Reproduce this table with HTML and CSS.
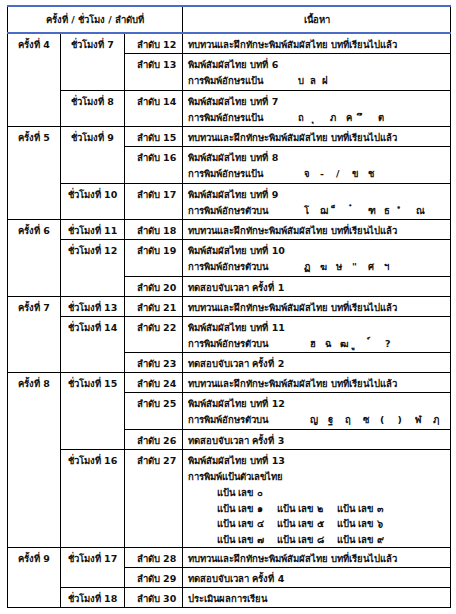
FILE: index.html
```html
<!DOCTYPE html>
<html lang="th">
<head>
<meta charset="utf-8">
<title>แผนการสอน</title>
<link rel="stylesheet" href="styles.css">
</head>
<body>
<table class="plan">
  <colgroup>
    <col class="c1"><col class="c2"><col class="c3"><col class="c4">
  </colgroup>
  <thead>
    <tr>
      <th colspan="3">ครั้งที่ / ชั่วโมง / ลำดับที่</th>
      <th>เนื้อหา</th>
    </tr>
  </thead>
  <tbody>
    <tr>
      <td class="k" rowspan="3">ครั้งที่ 4</td>
      <td class="h" rowspan="2">ชั่วโมงที่ 7</td>
      <td class="n">ลำดับ 12</td>
      <td class="t">ทบทวนและฝึกทักษะพิมพ์สัมผัสไทย บทที่เรียนไปแล้ว</td>
    </tr>
    <tr>
      <td class="n">ลำดับ 13</td>
      <td class="t">พิมพ์สัมผัสไทย บทที่ 6<div class="line"><span class="lbl">การพิมพ์อักษรแป้น</span><span class="keys narrow"><span>บ</span><span>ล</span><span>ฝ</span></span></div></td>
    </tr>
    <tr>
      <td class="h">ชั่วโมงที่ 8</td>
      <td class="n">ลำดับ 14</td>
      <td class="t">พิมพ์สัมผัสไทย บทที่ 7<div class="line"><span class="lbl">การพิมพ์อักษรแป้น</span><span class="keys"><span>ถ</span><span>ุ</span><span>ภ</span><span>ค</span><span>ึ</span><span>ต</span></span></div></td>
    </tr>

    <tr>
      <td class="k" rowspan="3">ครั้งที่ 5</td>
      <td class="h" rowspan="2">ชั่วโมงที่ 9</td>
      <td class="n">ลำดับ 15</td>
      <td class="t">ทบทวนและฝึกทักษะพิมพ์สัมผัสไทย บทที่เรียนไปแล้ว</td>
    </tr>
    <tr>
      <td class="n">ลำดับ 16</td>
      <td class="t">พิมพ์สัมผัสไทย บทที่ 8<div class="line"><span class="lbl">การพิมพ์อักษรแป้น</span><span class="keys shift"><span>จ</span><span>-</span><span>/</span><span>ข</span><span>ช</span></span></div></td>
    </tr>
    <tr>
      <td class="h">ชั่วโมงที่ 10</td>
      <td class="n">ลำดับ 17</td>
      <td class="t">พิมพ์สัมผัสไทย บทที่ 9<div class="line"><span class="lbl">การพิมพ์อักษรตัวบน</span><span class="keys shift"><span>โ</span><span>ฌ</span><span>็</span><span>๋</span><span>ฑ</span><span>ธ</span><span>ํ</span><span>ณ</span></span></div></td>
    </tr>

    <tr>
      <td class="k" rowspan="3">ครั้งที่ 6</td>
      <td class="h">ชั่วโมงที่ 11</td>
      <td class="n">ลำดับ 18</td>
      <td class="t">ทบทวนและฝึกทักษะพิมพ์สัมผัสไทย บทที่เรียนไปแล้ว</td>
    </tr>
    <tr>
      <td class="h" rowspan="2">ชั่วโมงที่ 12</td>
      <td class="n">ลำดับ 19</td>
      <td class="t">พิมพ์สัมผัสไทย บทที่ 10<div class="line"><span class="lbl">การพิมพ์อักษรตัวบน</span><span class="keys shift"><span>ฏ</span><span>ฆ</span><span>ษ</span><span>"</span><span>ศ</span><span>ฯ</span></span></div></td>
    </tr>
    <tr>
      <td class="n">ลำดับ 20</td>
      <td class="t">ทดสอบจับเวลา ครั้งที่ 1</td>
    </tr>

    <tr>
      <td class="k" rowspan="3">ครั้งที่ 7</td>
      <td class="h">ชั่วโมงที่ 13</td>
      <td class="n">ลำดับ 21</td>
      <td class="t">ทบทวนและฝึกทักษะพิมพ์สัมผัสไทย บทที่เรียนไปแล้ว</td>
    </tr>
    <tr>
      <td class="h" rowspan="2">ชั่วโมงที่ 14</td>
      <td class="n">ลำดับ 22</td>
      <td class="t">พิมพ์สัมผัสไทย บทที่ 11<div class="line"><span class="lbl">การพิมพ์อักษรตัวบน</span><span class="keys mid"><span>ฮ</span><span>ฉ</span><span>ฒ</span><span>ู</span><span>์</span><span>?</span></span></div></td>
    </tr>
    <tr>
      <td class="n">ลำดับ 23</td>
      <td class="t">ทดสอบจับเวลา ครั้งที่ 2</td>
    </tr>

    <tr>
      <td class="k" rowspan="4">ครั้งที่ 8</td>
      <td class="h" rowspan="3">ชั่วโมงที่ 15</td>
      <td class="n">ลำดับ 24</td>
      <td class="t">ทบทวนและฝึกทักษะพิมพ์สัมผัสไทย บทที่เรียนไปแล้ว</td>
    </tr>
    <tr>
      <td class="n">ลำดับ 25</td>
      <td class="t">พิมพ์สัมผัสไทย บทที่ 12<div class="line"><span class="lbl">การพิมพ์อักษรตัวบน</span><span class="keys wide"><span>ญ</span><span>ฐ</span><span>ฤ</span><span>ซ</span><span>(</span><span>)</span><span>ฬ</span><span>ฦ</span></span></div></td>
    </tr>
    <tr>
      <td class="n">ลำดับ 26</td>
      <td class="t">ทดสอบจับเวลา ครั้งที่ 3</td>
    </tr>
    <tr>
      <td class="h">ชั่วโมงที่ 16</td>
      <td class="n">ลำดับ 27</td>
      <td class="t">พิมพ์สัมผัสไทย บทที่ 13<div class="line">การพิมพ์แป้นตัวเลขไทย</div>
        <div class="digits">
          <div class="drow"><span>แป้น เลข ๐</span></div>
          <div class="drow"><span>แป้น เลข ๑</span><span>แป้น เลข ๒</span><span>แป้น เลข ๓</span></div>
          <div class="drow"><span>แป้น เลข ๔</span><span>แป้น เลข ๕</span><span>แป้น เลข ๖</span></div>
          <div class="drow"><span>แป้น เลข ๗</span><span>แป้น เลข ๘</span><span>แป้น เลข ๙</span></div>
        </div>
      </td>
    </tr>

    <tr>
      <td class="k" rowspan="3">ครั้งที่ 9</td>
      <td class="h" rowspan="2">ชั่วโมงที่ 17</td>
      <td class="n">ลำดับ 28</td>
      <td class="t">ทบทวนและฝึกทักษะพิมพ์สัมผัสไทย บทที่เรียนไปแล้ว</td>
    </tr>
    <tr>
      <td class="n">ลำดับ 29</td>
      <td class="t">ทดสอบจับเวลา ครั้งที่ 4</td>
    </tr>
    <tr>
      <td class="h">ชั่วโมงที่ 18</td>
      <td class="n">ลำดับ 30</td>
      <td class="t">ประเมินผลการเรียน</td>
    </tr>
  </tbody>
</table>
</body>
</html>
```

FILE: styles.css
```css
html, body {
  margin: 0;
  padding: 0;
  background: #ffffff;
}

body {
  padding: 5px 0 0 7px;
  font-family: Tahoma, "DejaVu Sans", "Noto Sans", sans-serif;
  font-size: 9.5px;
  font-weight: bold;
  color: #111111;
}

.plan {
  border-collapse: collapse;
  table-layout: fixed;
  width: 443px;
}

.c1 { width: 53px; }
.c2 { width: 64px; }
.c3 { width: 58px; }
.c4 { width: 268px; }

.plan th,
.plan td {
  border: 1px solid #000000;
  padding: 2px 0 0 0;
  line-height: 17px;
  vertical-align: top;
  font-weight: bold;
}

.plan th {
  height: 25px;
  padding: 0;
  vertical-align: middle;
  text-align: center;
  border-top: 2px solid #4a6cc6;
  border-bottom: 2px solid #4a6cc6;
}

.plan td.k,
.plan td.h {
  text-align: center;
}

.plan td.n {
  text-align: center;
  padding-left: 6px;
}

.plan td.t {
  padding-left: 5px;
}

.line {
  display: flex;
  height: 16.5px;
  line-height: 16.5px;
  overflow: visible;
}

.lbl {
  width: 110px;
  flex: none;
}

.keys {
  display: flex;
  height: 16.5px;
}

.keys span {
  width: 16px;
  height: 16.5px;
  line-height: 16.5px;
  flex: none;
}

.keys.narrow span { width: 12px; }
.keys.shift { margin-left: 6px; }
.keys.mid { margin-left: 12px; }
.keys.mid span { width: 15px; }
.keys.wide { margin-left: 12px; }
.keys.wide span { width: 17.5px; }

.digits {
  padding-left: 29px;
}

.drow {
  display: flex;
  height: 15.5px;
  line-height: 15.5px;
}

.drow span {
  width: 60px;
  flex: none;
}
```
